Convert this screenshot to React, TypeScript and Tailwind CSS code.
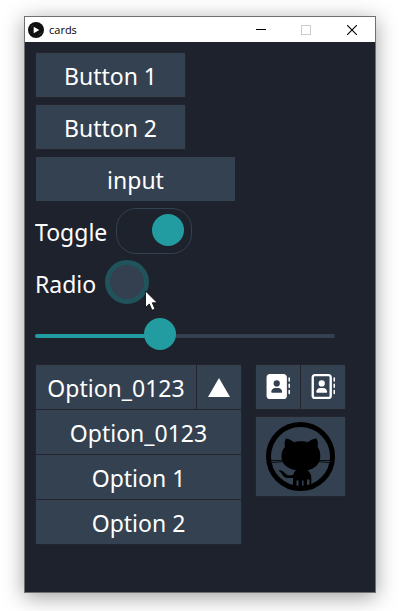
import { useState } from "react";
import type { ReactNode } from "react";
import { FaAddressBook, FaRegAddressBook } from "react-icons/fa6";

const OPTIONS = ["Option_0123", "Option 1", "Option 2"];

function TitleBar() {
  return (
    <header className="flex h-[25px] items-center bg-white text-black">
      <svg viewBox="0 0 16 16" className="ml-[3px] size-4" aria-hidden="true">
        <circle cx="8" cy="8" r="8" fill="#101010" />
        <path d="M2.5 5.5 5 3M11 13l2.5-2.5" stroke="#333" strokeWidth="1" />
        <path d="M5.7 4.8 11.3 8 5.7 11.2Z" fill="#fff" />
      </svg>
      <h1 className="ml-[5px] flex-1 font-['Open_Sans',sans-serif] text-[11px] leading-4">cards</h1>
      <button type="button" aria-label="Minimize" className="flex h-full w-[45px] items-center justify-center">
        <svg viewBox="0 0 10 10" className="size-[10px]" shapeRendering="crispEdges">
          <path d="M0 4.5H10" stroke="#000" />
        </svg>
      </button>
      <button type="button" aria-label="Maximize" disabled className="flex h-full w-[45px] items-center justify-center">
        <svg viewBox="0 0 10 10" className="size-[10px]" fill="none" shapeRendering="crispEdges">
          <path d="M.5 .5H9.5V9.5H.5Z" stroke="#ccc" />
        </svg>
      </button>
      <button type="button" aria-label="Close" className="flex h-full w-[47px] items-center justify-center">
        <svg viewBox="0 0 10 10" className="size-[10px]">
          <path d="M0 0 10 10M10 0 0 10" stroke="#000" strokeWidth="1.1" />
        </svg>
      </button>
    </header>
  );
}

function PushButton({ children }: { children: ReactNode }) {
  return (
    <button type="button" className="h-[46px] w-[151px] border border-[#24242e] bg-[#334150] pt-0.5 text-center">
      {children}
    </button>
  );
}

function Octocat() {
  return (
    <svg viewBox="0 0 70 70" className="size-[70px]" aria-hidden="true">
      <circle cx="34.5" cy="34.5" r="32" fill="none" stroke="#000" strokeWidth="5" />
      <path
        d="M20 16.500C21 16.500 24.500 17.500 28 20.300C32 19 38 19 42 20.300C45 17.500 49 16.500 50.500 16.500C52 19 52.300 22 51.600 25C53.600 27.500 54.300 30.500 54.300 34C54.300 42 49 46.500 41.500 48.200C44 50 45.300 52.500 45.300 56V63.500H43.500V57.500H41V65H37.500V58.500H36V66H32.500V58.500H30.500V65H27V56H22C18.500 56 17 54 15.500 51.500C14.600 50 13.500 49.500 12.500 48.500C15 48 17 49 18.500 50.800C20.500 53 23 54 27 53C27.500 51 28.500 49.500 30 48.200C21 46.500 15.500 42 15.500 34.500C15.500 30.500 16.500 27.500 19 25C18 22 18.600 19 20 16.500Z"
        fill="#000"
      />
      <path d="M5 38.500H16.500M6 40.500 17 39.800M53 38.500H64M53 39.800 63 40.500" stroke="#000" strokeWidth=".8" />
    </svg>
  );
}

function Slider() {
  const [value, setValue] = useState(122);
  const fill = 16 + (value / 300) * 268;
  return (
    <div className="flex h-[46px] items-center pt-[2px]">
      <input
        type="range"
        aria-label="Slider"
        min={0}
        max={300}
        value={value}
        onChange={(e) => setValue(Number(e.target.value))}
        style={{
          backgroundImage: `linear-gradient(to right, #229ca0 ${fill}px, #334150 ${fill}px)`,
        }}
        className="h-1 w-[300px] appearance-none rounded-sm [&::-webkit-slider-runnable-track]:h-1 [&::-webkit-slider-thumb]:mt-[-16px] [&::-webkit-slider-thumb]:size-8 [&::-webkit-slider-thumb]:appearance-none [&::-webkit-slider-thumb]:rounded-full [&::-webkit-slider-thumb]:bg-[#229ca0]"
      />
    </div>
  );
}

function Dropdown() {
  const [choice, setChoice] = useState(OPTIONS[0]);
  const [open, setOpen] = useState(true);
  return (
    <div className="w-[207px] border border-[#24242e] bg-[#334150]">
      <div className="flex h-11">
        <select
          aria-label="Option"
          value={choice}
          onChange={(e) => setChoice(e.target.value)}
          className="w-[160px] appearance-none pt-0.5 text-center [text-align-last:center]"
        >
          {OPTIONS.map((o) => (
            <option key={o}>{o}</option>
          ))}
        </select>
        <button
          type="button"
          aria-label="Toggle options"
          onClick={() => setOpen(!open)}
          className="flex flex-1 items-center justify-center border-l border-[#24242e]"
        >
          <svg viewBox="0 0 22 19" className="h-[19px] w-[22px]" aria-hidden="true">
            <path d="M11 0 22 19H0Z" fill="#fff" />
          </svg>
        </button>
      </div>
      {open && (
        <ul>
          {OPTIONS.map((o) => (
            <li key={o} className="border-t border-[#24242e]">
              <button type="button" onClick={() => setChoice(o)} className="h-11 w-full pt-0.5 text-center">
                {o}
              </button>
            </li>
          ))}
        </ul>
      )}
    </div>
  );
}

export default function App() {
  return (
    <div className="flex min-h-screen bg-white pt-4 pr-[27px] pb-[18px] pl-6">
      <div className="flex flex-1 flex-col border border-[#707070] bg-[#1e222c] shadow-[0_4px_20px_rgba(0,0,0,0.38)]">
        <TitleBar />
        <main className="flex flex-1 flex-col items-start gap-1.5 p-[10px] font-['Noto_Sans',sans-serif] text-[23px] leading-[30px] text-white">
          <PushButton>Button 1</PushButton>
          <PushButton>Button 2</PushButton>
          <input
            type="text"
            aria-label="Text"
            defaultValue="input"
            className="h-[46px] w-[201px] border border-[#1e222c] bg-[#334150] pt-0.5 text-center"
          />
          <div className="flex h-[46px] items-center gap-[9px]">
            <label htmlFor="toggle" className="pt-0.5">Toggle</label>
            <span className="relative flex h-[46px] w-[76px] rounded-[20px] border border-[#334150]">
              <input id="toggle" type="checkbox" role="switch" defaultChecked className="peer size-full appearance-none" />
              <span className="pointer-events-none absolute top-[5px] left-[7px] size-8 rounded-full bg-[#229ca0] peer-checked:left-[35px]" />
            </span>
          </div>
          <div className="relative flex h-[46px] items-center gap-[9px]">
            <label htmlFor="radio" className="pt-0.5">Radio</label>
            <input
              id="radio"
              type="radio"
              className="size-11 appearance-none self-start rounded-full border-[5px] border-[#20535b] bg-[#34404f]"
            />
            <svg
              viewBox="0 0 13 21"
              className="pointer-events-none absolute top-[30px] -right-[9px] h-[21px] w-[13px]"
              aria-hidden="true"
            >
              <path d="M.5 1V17.500L4.300 14 7 20.300 10 19 7.300 12.800H12.300Z" fill="#fff" stroke="#000" strokeWidth=".8" />
            </svg>
          </div>
          <Slider />
          <div className="flex items-start gap-[13px]">
            <Dropdown />
            <div className="flex flex-col gap-1.5">
              <div className="flex h-[46px] w-[91px] divide-x divide-[#24242e] border border-[#24242e] bg-[#334150] text-[25px]">
                <button type="button" aria-label="Contacts" className="flex flex-1 items-center justify-center pr-0.5 pb-0.5">
                  <FaAddressBook />
                </button>
                <button type="button" aria-label="Contacts outline" className="flex flex-1 items-center justify-center pr-0.5 pb-0.5">
                  <FaRegAddressBook />
                </button>
              </div>
              <button
                type="button"
                aria-label="GitHub"
                className="flex h-[81px] w-[91px] items-center justify-center border border-[#24242e] bg-[#334150]"
              >
                <Octocat />
              </button>
            </div>
          </div>
        </main>
      </div>
    </div>
  );
}
